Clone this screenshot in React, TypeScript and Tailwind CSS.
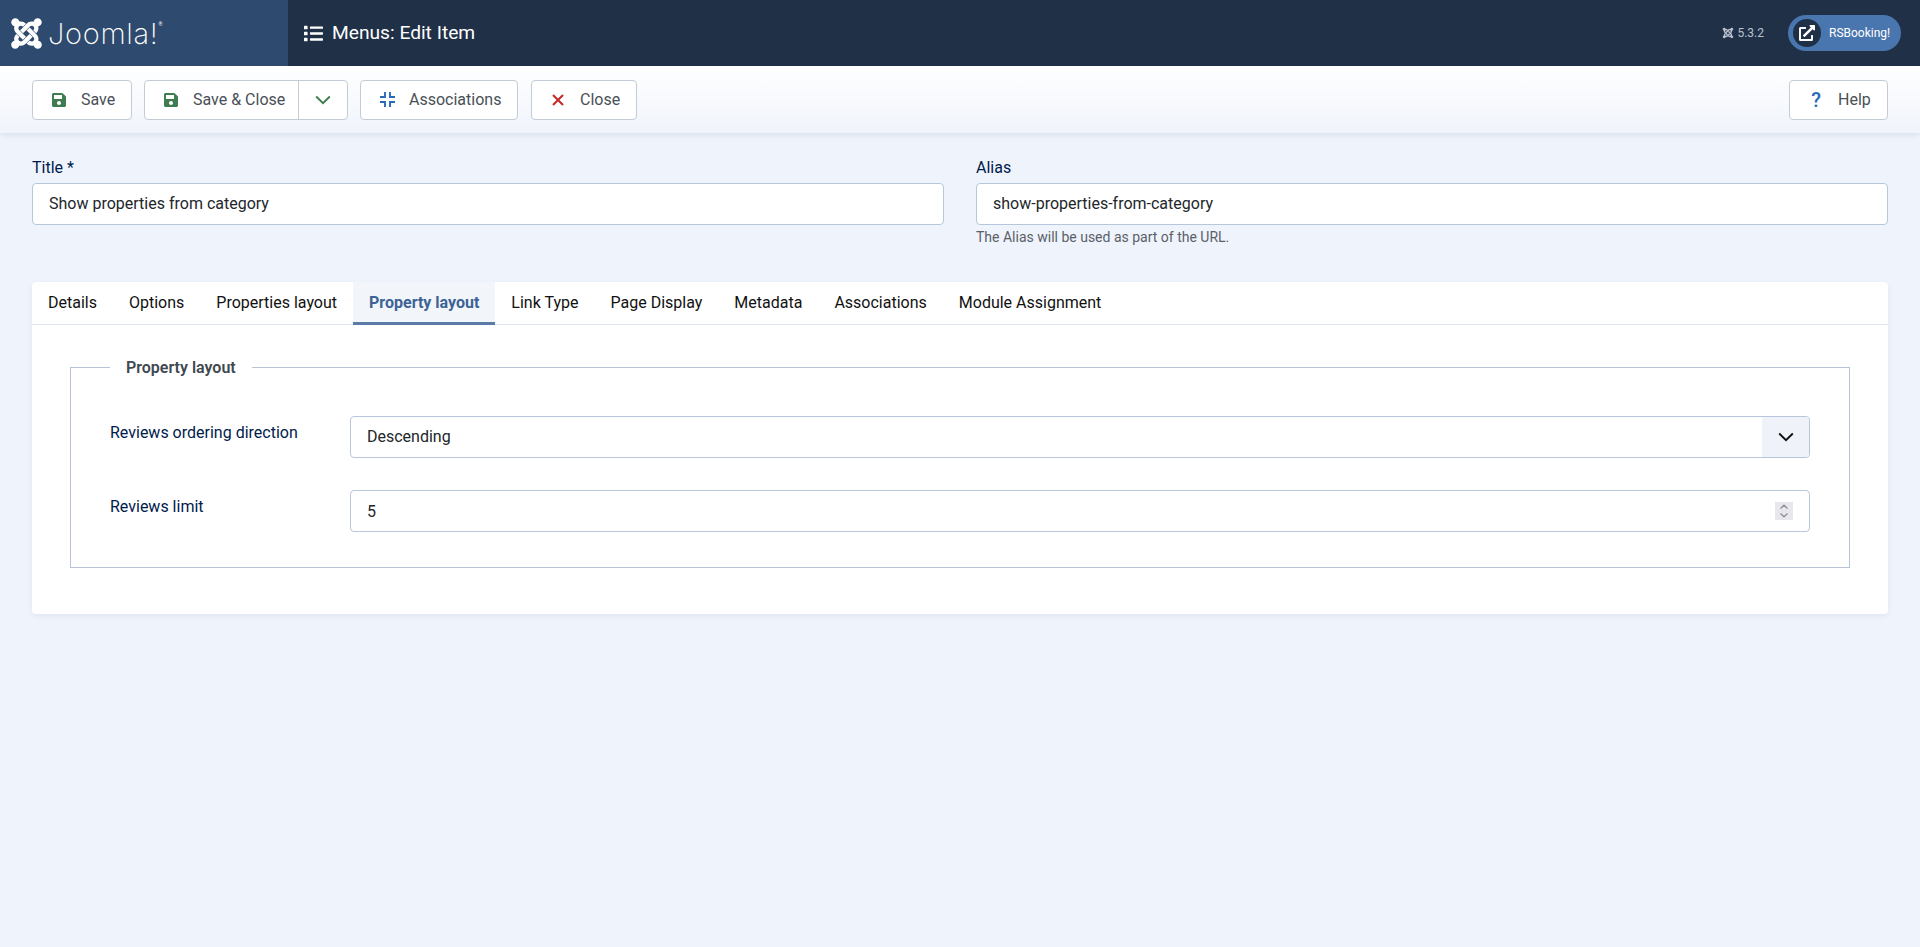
import { FaExternalLinkAlt, FaJoomla, FaList, FaSave } from "react-icons/fa";

/* ================= HEADER ================= */

function Chevron({ className }: { className: string }) {
  return (
    <svg viewBox="0 0 16 10" fill="none" stroke="currentColor" strokeWidth="1.9" className={className}>
      <path d="M1.2 1.5 8 8.2l6.8-6.7" />
    </svg>
  );
}

function Header() {
  return (
    <header className="flex h-[66px] items-stretch bg-[#1f3047] text-white">
      <div className="flex w-[288px] items-center bg-[#2e4a6e] pl-[10px]">
        <FaJoomla className="h-[35px] w-[33px]" />
        <span className="ml-[5px] font-['Inter',sans-serif] text-[29px] font-extralight leading-none tracking-[0.7px]">
          Joomla!
        </span>
        <sup className="mt-[-14px] text-[5px]">®</sup>
      </div>
      <div className="flex flex-1 items-center pl-4">
        <FaList className="h-[19px] w-[19px]" />
        <h1 className="ml-[9px] text-[19.2px] font-normal">Menus: Edit Item</h1>
      </div>
      <div className="flex items-center pr-[19px]">
        <div className="flex items-center gap-[1px] text-xs text-[#b9c2ce]">
          <FaJoomla className="h-3 w-3" />
          <span className="ml-[2px]">5.3.2</span>
        </div>
        <a className="ml-6 flex h-9 w-[113px] items-center rounded-full bg-[#4a76af] pl-[5px] text-xs text-white">
          <span className="flex h-[28px] w-[28px] items-center justify-center rounded-full bg-[#1f3047]">
            <FaExternalLinkAlt className="h-[16px] w-[16px]" />
          </span>
          <span className="ml-2">RSBooking!</span>
        </a>
      </div>
    </header>
  );
}

/* ================= TOOLBAR ================= */

const btn =
  "flex h-10 items-center rounded border border-[#c3cbd8] bg-white text-base text-[#495057]";

function CloseIcon() {
  return (
    <svg viewBox="0 0 12 12" fill="none" stroke="currentColor" strokeWidth="2" className="h-3 w-3 text-[#c52827]">
      <path d="M1 1l10 10M11 1 1 11" />
    </svg>
  );
}

function CompressIcon() {
  return (
    <svg viewBox="0 0 15 15" fill="none" stroke="currentColor" strokeWidth="1.9" className="h-[15px] w-[15px] text-[#2a69b8]">
      <path d="M5 0v5H0M10 0v5h5M5 15v-5H0M10 15v-5h5" />
    </svg>
  );
}

function HelpIcon() {
  return <span className="w-[14px] text-center text-xl font-medium leading-none text-[#2a69b8]">?</span>;
}

function Toolbar() {
  return (
    <div className="flex h-[67px] items-center justify-between bg-gradient-to-b from-white to-[#f0f4fb] px-8 shadow-[0_2px_6px_rgba(52,78,120,0.12)]">
      <div className="flex items-center">
        <button className={`${btn} w-[100px] pl-[18px]`}>
          <FaSave className="h-4 w-4 text-[#3f7d50]" />
          <span className="ml-[14px]">Save</span>
        </button>
        <div className={`${btn} ml-3 w-[204px]`}>
          <button className="flex h-full w-[153px] items-center pl-[18px]">
            <FaSave className="h-4 w-4 text-[#3f7d50]" />
            <span className="ml-[14px]">Save &amp; Close</span>
          </button>
          <button className="flex h-full flex-1 items-center justify-center border-l border-[#c3cbd8]">
            <Chevron className="h-[10px] w-4 text-[#3f7d50]" />
          </button>
        </div>
        <button className={`${btn} ml-3 w-[158px] pl-[19px]`}>
          <CompressIcon />
          <span className="ml-[14px]">Associations</span>
        </button>
        <button className={`${btn} ml-[13px] w-[106px] pl-[20px]`}>
          <CloseIcon />
          <span className="ml-4">Close</span>
        </button>
      </div>
      <button className={`${btn} w-[99px] pl-[19px]`}>
        <HelpIcon />
        <span className="ml-[15px]">Help</span>
      </button>
    </div>
  );
}

/* ================= TITLE + ALIAS ================= */

function TitleField({ label, value, hint }: { label: string; value: string; hint?: string }) {
  return (
    <div className="flex-1">
      <label className="mb-[3px] block text-base leading-6 text-[#001b4c]">{label}</label>
      <input
        readOnly
        value={value}
        className="h-[42px] w-full rounded border border-[#b8c6dc] bg-white px-4 pb-px text-base text-[#22262a] outline-none"
      />
      {hint && <p className="mt-[2px] text-sm text-[#5a6068]">{hint}</p>}
    </div>
  );
}

/* ================= TABS ================= */

const tabs = [
  "Details",
  "Options",
  "Properties layout",
  "Property layout",
  "Link Type",
  "Page Display",
  "Metadata",
  "Associations",
  "Module Assignment",
];

function Tabs() {
  return (
    <div className="flex h-[43px] border-b border-[#dfe5ef]">
      {tabs.map((tab) =>
        tab === "Property layout" ? (
          <button
            key={tab}
            className="h-[43px] border-b-[3px] border-[#5a7ba6] bg-[#f2f5f9] px-4 pt-[1px] text-base font-bold text-[#3d6395]"
          >
            {tab}
          </button>
        ) : (
          <button key={tab} className="h-[42px] px-4 text-base text-[#111]">
            {tab}
          </button>
        ),
      )}
    </div>
  );
}

/* ================= FIELDSET ================= */

function PropertyLayout() {
  return (
    <fieldset className="h-[213px] border border-[#b8c4d6] pt-[37px] pr-[39px] pb-[35px] pl-[39px]">
      <legend className="relative top-px px-4 text-base font-semibold text-[#404850]">Property layout</legend>
      <div className="flex flex-col gap-8">
        <div className="flex">
          <label className="w-[240px] pt-[5px] text-base leading-6 text-[#001b4c]">Reviews ordering direction</label>
          <div className="relative flex-1">
            <select className="h-[42px] w-full appearance-none rounded border border-[#b8c6dc] bg-white px-4 text-base text-[#22262a] outline-none">
              <option>Descending</option>
            </select>
            <span className="absolute top-px right-px bottom-px flex w-[47px] items-center justify-center rounded-r bg-[#eff3f9]">
              <Chevron className="h-[10px] w-4 text-[#111]" />
            </span>
          </div>
        </div>
        <div className="flex">
          <label className="w-[240px] pt-[5px] text-base leading-6 text-[#001b4c]">Reviews limit</label>
          <div className="relative flex-1">
            <input
              readOnly
              value="5"
              className="h-[42px] w-full rounded border border-[#b8c6dc] bg-white px-4 text-base text-[#22262a] outline-none"
            />
            <span className="absolute top-3 right-[17px] flex h-[18px] w-[18px] flex-col items-center justify-center bg-[#e7e7ec]">
              <svg viewBox="0 0 10 14" className="h-[14px] w-[10px] text-[#8f8f9d]" fill="none" stroke="currentColor" strokeWidth="1.3">
                <path d="M1.5 4.5 5 1.2l3.5 3.3M1.5 9.5 5 12.8l3.5-3.3" />
              </svg>
            </span>
          </div>
        </div>
      </div>
    </fieldset>
  );
}

/* ================= PAGE ================= */

export default function App() {
  return (
    <div className="min-h-[947px] bg-[#eff4fc] font-['Roboto',sans-serif]">
      <Header />
      <Toolbar />
      <main className="px-8 pt-[23px]">
        <div className="flex gap-8">
          <TitleField label="Title *" value="Show properties from category" />
          <TitleField
            label="Alias"
            value="show-properties-from-category"
            hint="The Alias will be used as part of the URL."
          />
        </div>
        <section className="mt-[35px] rounded-sm bg-white shadow-[0_2px_6px_rgba(52,78,120,0.08)]">
          <Tabs />
          <div className="px-[38px] pt-[30px] pb-[46px]">
            <PropertyLayout />
          </div>
        </section>
      </main>
    </div>
  );
}
